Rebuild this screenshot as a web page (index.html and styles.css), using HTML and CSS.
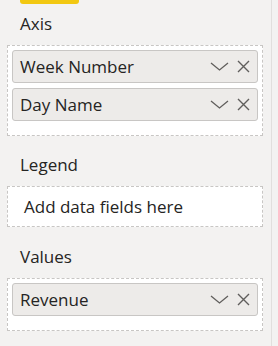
FILE: index.html
```html
<!DOCTYPE html>
<html>
<head lang="en">
    <meta charset="UTF-8">
    <title>Fields</title>
    <link rel="stylesheet" href="styles.css">
</head>
<body>
<div class="pane">
    <div class="tab-mark"></div>

    <div class="section axis">
        <div class="label">Axis</div>
        <div class="well">
            <div class="chip">
                <span class="chip-name">Week Number</span>
                <svg class="chev" width="19" height="9" viewBox="0 0 19 9"><path d="M1 1 L9.5 8 L18 1" fill="none" stroke="#605e5c" stroke-width="1.3"/></svg>
                <svg class="close" width="13" height="13" viewBox="0 0 13 13"><path d="M1 1 L12 12 M12 1 L1 12" fill="none" stroke="#605e5c" stroke-width="1.4"/></svg>
            </div>
            <div class="chip">
                <span class="chip-name">Day Name</span>
                <svg class="chev" width="19" height="9" viewBox="0 0 19 9"><path d="M1 1 L9.5 8 L18 1" fill="none" stroke="#605e5c" stroke-width="1.3"/></svg>
                <svg class="close" width="13" height="13" viewBox="0 0 13 13"><path d="M1 1 L12 12 M12 1 L1 12" fill="none" stroke="#605e5c" stroke-width="1.4"/></svg>
            </div>
        </div>
    </div>

    <div class="section legend">
        <div class="label">Legend</div>
        <div class="well empty">Add data fields here</div>
    </div>

    <div class="section values">
        <div class="label">Values</div>
        <div class="well">
            <div class="chip">
                <span class="chip-name">Revenue</span>
                <svg class="chev" width="19" height="9" viewBox="0 0 19 9"><path d="M1 1 L9.5 8 L18 1" fill="none" stroke="#605e5c" stroke-width="1.3"/></svg>
                <svg class="close" width="13" height="13" viewBox="0 0 13 13"><path d="M1 1 L12 12 M12 1 L1 12" fill="none" stroke="#605e5c" stroke-width="1.4"/></svg>
            </div>
        </div>
    </div>
</div>
</body>
</html>
```

FILE: styles.css
```css
*{
    margin: 0;
    padding: 0;
    box-sizing: border-box;
}
html,
body{
    background: #f3f2f1;
}
body{
    width: 278px;
    height: 346px;
    overflow: hidden;
    font-family: "Open Sans", "Noto Sans", sans-serif;
    font-size: 17px;
    color: #252423;
}
.pane{
    width: 272px;
    height: 346px;
    border-right: 1px solid #e1dfdd;
}
.tab-mark{
    width: 59px;
    height: 4px;
    margin-left: 20px;
    background: #f2c811;
    border-radius: 0 0 3px 3px;
}
.axis{
    padding-top: 10px;
}
.legend{
    padding-top: 19px;
}
.values{
    padding-top: 20px;
}
.label{
    height: 20px;
    line-height: 20px;
    padding-left: 20px;
    margin-bottom: 11px;
}
.well{
    margin: 0 8px 0 7px;
    padding: 4px 4px 14px;
    background: #fff;
    border: 1px dashed #c8c6c4;
    display: flex;
    flex-direction: column;
    gap: 5px;
}
.well.empty{
    height: 41px;
    padding: 0 0 0 16px;
    justify-content: center;
}
.chip{
    height: 33px;
    display: flex;
    align-items: center;
    padding: 0 7px;
    background: #edebe9;
    border: 1px solid #c8c6c4;
    border-radius: 3px;
}
.chip-name{
    flex: 1;
}
.chev{
    margin-right: 8px;
}
```
